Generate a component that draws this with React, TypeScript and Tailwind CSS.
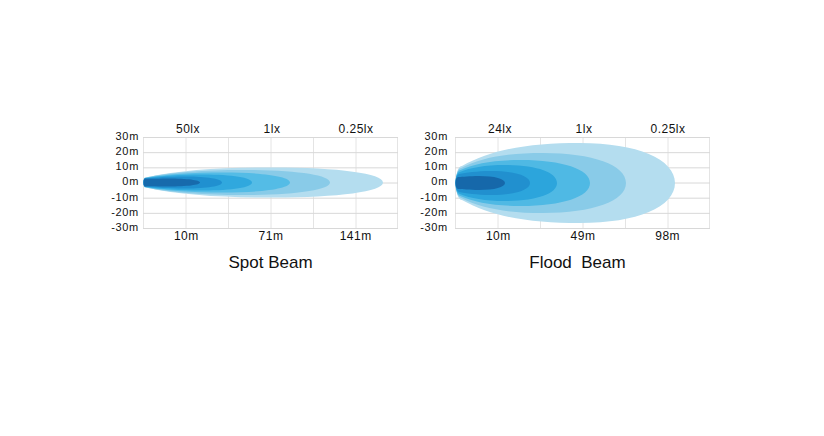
import React from "react";

type Layer = { T: number; H: number; h0: number; P: number; c: string };

const spotLayers: Layer[] = [
  { T: 240, H: 15, h0: 5, P: 130, c: "#b4ddef" },
  { T: 187, H: 12.5, h0: 5, P: 100, c: "#89cbe8" },
  { T: 147, H: 10, h0: 4.5, P: 80, c: "#54bce6" },
  { T: 109, H: 8, h0: 4.5, P: 60, c: "#30a8de" },
  { T: 79, H: 6, h0: 4, P: 42, c: "#2090d0" },
  { T: 57, H: 4, h0: 4, P: 25, c: "#176aac" },
];

const floodLayers: Layer[] = [
  { T: 220, H: 40, h0: 17, P: 125, c: "#b4ddef" },
  { T: 171, H: 30, h0: 15, P: 88, c: "#89cbe8" },
  { T: 135, H: 23, h0: 13, P: 66, c: "#4fb9e4" },
  { T: 102, H: 18, h0: 11, P: 50, c: "#2ca5dc" },
  { T: 75, H: 12, h0: 9, P: 36, c: "#2190cf" },
  { T: 50, H: 7, h0: 6, P: 24, c: "#1668aa" },
];

const yLabels = ["30m", "20m", "10m", "0m", "-10m", "-20m", "-30m"];

function beamPath(l: Layer, cy: number) {
  const { T, H, h0, P } = l;
  const x0 = h0 * 0.35 + 1;
  const k = P + (T - P) * 0.6;
  return [
    `M ${x0} ${cy - h0}`,
    `C ${P * 0.3} ${cy - H * 0.85}, ${P * 0.6} ${cy - H}, ${P} ${cy - H}`,
    `C ${k} ${cy - H}, ${T} ${cy - H * 0.6}, ${T} ${cy}`,
    `C ${T} ${cy + H * 0.6}, ${k} ${cy + H}, ${P} ${cy + H}`,
    `C ${P * 0.6} ${cy + H}, ${P * 0.3} ${cy + H * 0.85}, ${x0} ${cy + h0}`,
    `A ${x0 - 0.5} ${h0} 0 0 1 ${x0} ${cy - h0} Z`,
  ].join(" ");
}

function Plot({ layers, cy }: { layers: Layer[]; cy: number }) {
  const rows = Array.from({ length: 7 }, (_, i) => 0.5 + i * 15.17);
  const cols = Array.from({ length: 7 }, (_, i) => Math.min(254.5, 0.5 + i * 42.5));
  return (
    <svg width="255" height="92" viewBox="0 0 255 92" className="block">
      {cols.map((x) => (
        <line key={"v" + x} x1={x} x2={x} y1={0} y2={92} stroke="#e4e4e4" strokeWidth="1" />
      ))}
      {rows.map((y) => (
        <line key={"h" + y} x1={0} x2={255} y1={y} y2={y} stroke="#d8d8d8" strokeWidth="1" />
      ))}
      {layers.map((l, i) => (
        <path key={i} d={beamPath(l, cy)} fill={l.c} />
      ))}
    </svg>
  );
}

function BeamChart({
  lux,
  dist,
  title,
  layers,
  cy,
  wide,
}: {
  lux: string[];
  dist: string[];
  title: string;
  layers: Layer[];
  cy: number;
  wide?: boolean;
}) {
  return (
    <div className="flex flex-col">
      <div className={`flex ${wide ? "gap-[7px]" : "gap-[4px]"}`}>
        <div className="flex flex-col w-[37px] pt-[7px] text-[11px] tracking-[0.7px] text-[#111] text-right">
          {yLabels.map((t) => (
            <div key={t} className="h-[15.17px] leading-[15.17px]">
              {t}
            </div>
          ))}
        </div>
        <div className="flex flex-col w-[255px]">
          <div className="grid grid-cols-3 h-[15px] pl-[3px] text-[12px] leading-[14px] tracking-[0.5px] text-[#111] text-center">
            {lux.map((t) => (
              <div key={t}>{t}</div>
            ))}
          </div>
          <Plot layers={layers} cy={cy} />
          <div className="grid grid-cols-3 h-[14px] pl-[1px] text-[12px] leading-[15px] tracking-[0.5px] text-[#111] text-center">
            {dist.map((t) => (
              <div key={t}>{t}</div>
            ))}
          </div>
        </div>
      </div>
      <div
        className={`mt-[10px] text-[17px] leading-[20px] text-[#111] text-center whitespace-pre ${
          wide ? "pl-[44px] pr-[10px]" : "pl-[41px]"
        }`}
      >
        {title}
      </div>
    </div>
  );
}

export default function App() {
  return (
    <div
      className="w-[824px] h-[436px] bg-white flex items-start gap-[13px] pl-[102px] pt-[122px]"
      style={{ fontFamily: '"Liberation Sans", Arial, sans-serif' }}
    >
      <BeamChart
        lux={["50lx", "1lx", "0.25lx"]}
        dist={["10m", "71m", "141m"]}
        title="Spot Beam"
        layers={spotLayers}
        cy={45.5}
      />
      <BeamChart
        lux={["24lx", "1lx", "0.25lx"]}
        dist={["10m", "49m", "98m"]}
        title="Flood  Beam"
        layers={floodLayers}
        cy={46}
        wide
      />
    </div>
  );
}
